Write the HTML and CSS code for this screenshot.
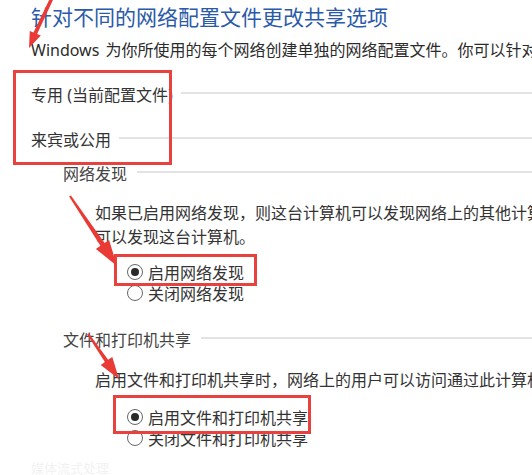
FILE: index.html
```html
<!DOCTYPE html>
<html lang="zh-CN">
<head>
<meta charset="utf-8">
<title>高级共享设置</title>
<link rel="stylesheet" href="styles.css">
</head>
<body>
<div class="page">
  <h1 class="title">针对不同的网络配置文件更改共享选项</h1>
  <p class="desc">Windows 为你所使用的每个网络创建单独的网络配置文件。你可以针对每个配置文件选择特定的选项。</p>

  <div class="group first">
    <span class="group-label">专用 (当前配置文件)</span>
    <span class="rule"></span>
  </div>
  <div class="group second">
    <span class="group-label">来宾或公用</span>
    <span class="rule"></span>
  </div>

  <div class="sub sub-a">
    <span class="sub-label">网络发现</span>
    <span class="rule"></span>
  </div>
  <p class="para para-a">如果已启用网络发现，则这台计算机可以发现网络上的其他计算机和设备，而其他网络计算机也<br>可以发现这台计算机。</p>
  <div class="options opt-a">
    <label class="radio"><span class="dot on"></span>启用网络发现</label>
    <label class="radio"><span class="dot"></span>关闭网络发现</label>
  </div>

  <div class="sub sub-b">
    <span class="sub-label">文件和打印机共享</span>
    <span class="rule"></span>
  </div>
  <p class="para para-b">启用文件和打印机共享时，网络上的用户可以访问通过此计算机共享的文件和打印机。</p>
  <div class="options opt-b">
    <label class="radio"><span class="dot on"></span>启用文件和打印机共享</label>
    <label class="radio"><span class="dot"></span>关闭文件和打印机共享</label>
  </div>
  <p class="faint">媒体流式处理</p>
</div>

<div class="mark mark-1"></div>
<div class="mark mark-2"></div>
<div class="mark mark-3"></div>

<svg class="arrows" width="532" height="475" viewBox="0 0 532 475" xmlns="http://www.w3.org/2000/svg">
  <polygon points="53.6,-1.4 37.1,34.1 40.8,35.6 29,48 29.8,31 33.5,32.5 50.4,-2.6"/>
  <polygon points="70.9,195.4 104.6,243 109.1,239.9 117,266 95.9,248.9 100.4,245.8 69.1,196.6"/>
  <polygon points="88.9,333.4 108.1,359.8 112.3,356.9 119,379 100.7,364.9 104.9,362 87.1,334.6"/>
</svg>
</body>
</html>
```

FILE: styles.css
```css
html, body {
  margin: 0;
  padding: 0;
  background: #ffffff;
}
body {
  width: 532px;
  height: 475px;
  overflow: hidden;
  position: relative;
  font-family: "Noto Sans", "Noto Sans CJK SC", sans-serif;
  color: #2b2b2b;
}
.page {
  width: 532px;
  box-sizing: border-box;
  overflow: hidden;
  padding-left: 31px;
  display: flex;
  flex-direction: column;
}
.title {
  margin: 0;
  height: 34px;
  line-height: 34px;
  font-size: 21px;
  font-weight: 400;
  color: #2b5aa8;
  white-space: nowrap;
}
.desc {
  margin: 0;
  height: 32px;
  line-height: 32px;
  font-size: 16px;
  white-space: nowrap;
  word-spacing: 2px;
}
.group, .sub {
  display: flex;
  align-items: center;
  height: 28px;
  font-size: 16px;
  white-space: nowrap;
}
.group.first { margin-top: 14px; }
.group.second { margin-top: 17px; }
.group-label { color: #333; margin-right: 8px; }
.sub { padding-left: 32px; }
.sub-label { color: #444; margin-right: 10px; }
.sub-a { margin-top: 6px; }
.sub-b { margin-top: 22px; }
.rule {
  flex: 1;
  height: 2px;
  background: #e3e3e3;
  margin-top: -2px;
}
.para {
  margin: 0;
  padding-left: 64px;
  font-size: 16px;
  line-height: 24px;
  white-space: nowrap;
  color: #333;
}
.para-a { margin-top: 14px; }
.para-b { margin-top: 15px; }
.options {
  display: flex;
  flex-direction: column;
  padding-left: 96px;
}
.opt-a { margin-top: 12px; }
.opt-b { margin-top: 14px; }
.radio {
  display: flex;
  align-items: center;
  gap: 5px;
  height: 21px;
  font-size: 16px;
  color: #333;
  white-space: nowrap;
}
.dot {
  width: 14px;
  height: 14px;
  border: 1px solid #666;
  border-radius: 50%;
  display: flex;
  align-items: center;
  justify-content: center;
  flex: none;
}
.dot.on::after {
  content: "";
  width: 8px;
  height: 8px;
  border-radius: 50%;
  background: #2a2a2a;
}
.faint {
  margin: 8px 0 0 0;
  font-size: 13px;
  line-height: 24px;
  color: #f2f2f2;
}
.mark {
  position: absolute;
  border: 3px solid #e8413e;
  box-sizing: border-box;
}
.mark-1 { left: 13px; top: 70px; width: 159px; height: 95px; }
.mark-2 { left: 114px; top: 254px; width: 143px; height: 32px; }
.mark-3 { left: 113px; top: 395px; width: 198px; height: 39px; }
.arrows {
  position: absolute;
  left: 0;
  top: 0;
  fill: #ea3a35;
  pointer-events: none;
}
```
